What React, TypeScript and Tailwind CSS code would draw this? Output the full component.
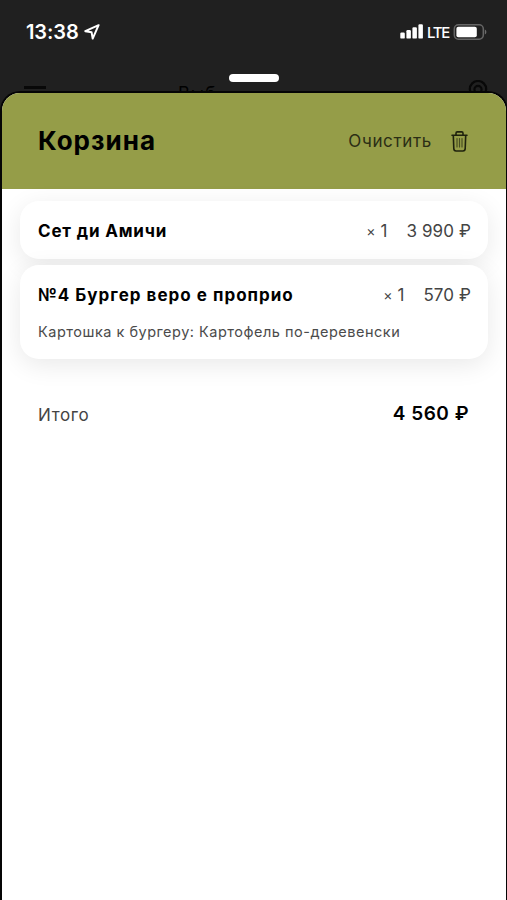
import React from "react";

type Item = {
  title: string;
  titleClass: string;
  price: string;
  note?: string;
};

const items: Item[] = [
  { title: "Сет ди Амичи", titleClass: "tracking-[0.83px]", price: "3 990 ₽" },
  {
    title: "№4 Бургер веро е проприо",
    titleClass: "tracking-[1.02px]",
    price: "570 ₽",
    note: "Картошка к бургеру: Картофель по-деревенски",
  },
];

function StatusBar() {
  return (
    <div className="flex h-[63px] items-center justify-between pl-[26px] pr-[20px] text-white">
      <div className="flex items-center gap-[5px]">
        <span className="text-[20px] font-semibold leading-none tracking-[-0.1px]">13:38</span>
        <svg width="16" height="16" viewBox="0 0 16 16" fill="none" stroke="#fff" strokeWidth="2" strokeLinejoin="round">
          <path d="M14.6 1.2 1.3 7.2 7.6 8.3 8.7 14.6Z" />
        </svg>
      </div>
      <div className="flex items-center">
        <svg width="24" height="15" viewBox="0 0 24 15" fill="#fff">
          <rect x="0.3" y="8.6" width="4.5" height="6" rx="1.2" />
          <rect x="6.4" y="6" width="4.5" height="8.6" rx="1.2" />
          <rect x="12.4" y="3.2" width="4.5" height="11.400" rx="1.2" />
          <rect x="18.4" y="0.2" width="4.5" height="14.4" rx="1.2" />
        </svg>
        <span className="ml-[3px] w-[22px] pt-px text-[15px] font-medium leading-none tracking-[-1.3px]">LTE</span>
        <svg className="ml-[4px]" width="34" height="16" viewBox="0 0 34 16" fill="none">
          <rect x="1.3" y="0.8" width="29" height="14.4" rx="4.2" stroke="#666" strokeWidth="1.5" />
          <rect x="3.4" y="2.8" width="20.4" height="10.4" rx="2" fill="#fff" />
          <path d="M31.8 5.5c2.1.8 2.1 4.2 0 5Z" fill="#6d6d6d" />
        </svg>
      </div>
    </div>
  );
}

function PageBehind() {
  return (
    <div className="flex h-[30px] items-start overflow-hidden pl-[24px] pr-[19px] text-black">
      <div className="mt-[23px] h-[3px] w-[22px] bg-[#080808]" />
      <span className="ml-[132px] mt-[22px] text-[18px] leading-none tracking-[1px]">Выб</span>
      <svg className="ml-auto mt-[17px] shrink-0" width="20" height="24" viewBox="0 0 20 24" fill="none" stroke="#080808" strokeWidth="2.2">
        <path d="M10 22C6 17 1.8 13 1.8 9.2a8.2 8.2 0 0 1 16.4 0C18.2 13 14 17 10 22Z" />
        <circle cx="10" cy="9.500" r="3.6" />
      </svg>
    </div>
  );
}

function Trash() {
  return (
    <svg width="17" height="21" viewBox="0 0 17 21" fill="none" stroke="#1f220d" strokeWidth="1.6" strokeLinejoin="round" strokeLinecap="round">
      <path d="M1 4.2h15M5 4V2.2q0-1.3 1.300-1.300h4.400q1.300 0 1.300 1.300V4M2.300 4.500l.5 13q.1 2.500 2.300 2.500h6.800q2.200 0 2.300-2.500l.5-13" />
      <path d="M6 7.500v8.500M8.500 7.500v8.500M11 7.500v8.500" strokeWidth="1.2" opacity="0.65" />
    </svg>
  );
}

function Card({ item }: { item: Item }) {
  return (
    <section className="rounded-[19px] bg-white px-[18px] shadow-[0_6px_26px_rgba(0,0,0,0.09)]">
      <div className="flex h-[58px] items-center whitespace-nowrap pt-[3px] text-[17px]">
        <h2 className={`font-bold text-black ${item.titleClass}`}>{item.title}</h2>
        <span className="ml-auto mr-[19px] flex items-center gap-[5px] text-[#444]">
          <span className="-mt-[3px] text-[14px]">×</span>
          <span>1</span>
        </span>
        <span className="-mr-px text-right tracking-[0.1px] text-[#444]">{item.price}</span>
      </div>
      {item.note && (
        <p className="h-[36px] whitespace-nowrap text-[14.5px] leading-[18px] tracking-[0.5px] text-[#4b4b4b]">{item.note}</p>
      )}
    </section>
  );
}

export default function App() {
  return (
    <div className="relative flex h-[900px] w-[507px] flex-col overflow-hidden bg-[#202020] font-['Inter','Noto_Sans',sans-serif]">
      <StatusBar />
      <PageBehind />
      <div className="absolute left-[229px] top-[74px] h-[8px] w-[50px] rounded-full bg-white" />
      <main className="ml-[2px] mr-[1px] flex-1 overflow-hidden rounded-t-[18px] bg-white shadow-[0_0_0_2px_#050505]">
        <header className="flex h-[96px] items-center bg-[#959d48] pl-[36px] pr-[38px]">
          <h1 className="-mt-px text-[26px] font-bold leading-none tracking-[1px] text-black">Корзина</h1>
          <button className="ml-auto mr-[19px] pt-px text-[17px] leading-none tracking-[0.65px] text-[#2b2e15]">Очистить</button>
          <Trash />
        </header>
        <div className="flex flex-col gap-[6px] px-[18px] pt-[12px]">
          {items.map((item) => (
            <Card key={item.title} item={item} />
          ))}
        </div>
        <footer className="mt-[42px] flex h-[26px] items-center justify-between pl-[36px] pr-[37px]">
          <span className="pt-[3px] text-[17px] tracking-[0.6px] text-[#444]">Итого</span>
          <strong className="text-[19px] font-semibold tracking-[0.5px] text-black">4 560 ₽</strong>
        </footer>
      </main>
    </div>
  );
}
